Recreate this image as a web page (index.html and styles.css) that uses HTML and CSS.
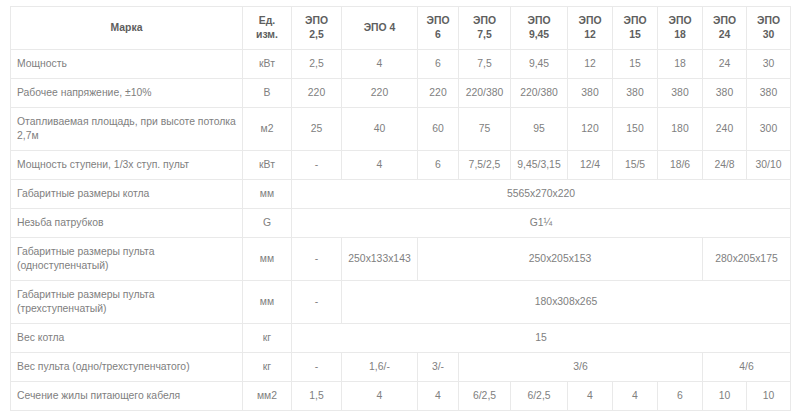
FILE: index.html
```html
<!DOCTYPE html>
<html lang="ru">
<head>
<meta charset="utf-8">
<title>ЭПО</title>
<link rel="stylesheet" href="styles.css">
</head>
<body>
<table class="spec">
  <colgroup>
    <col class="c-name"><col class="c-unit"><col class="c-25"><col class="c-4"><col class="c-6"><col class="c-75"><col class="c-945"><col class="c-12"><col class="c-15"><col class="c-18"><col class="c-24"><col class="c-30">
  </colgroup>
  <thead>
    <tr>
      <th>Марка</th>
      <th>Ед.<br>изм.</th>
      <th>ЭПО<br>2,5</th>
      <th>ЭПО 4</th>
      <th>ЭПО<br>6</th>
      <th>ЭПО<br>7,5</th>
      <th>ЭПО<br>9,45</th>
      <th>ЭПО<br>12</th>
      <th>ЭПО<br>15</th>
      <th>ЭПО<br>18</th>
      <th>ЭПО<br>24</th>
      <th>ЭПО<br>30</th>
    </tr>
  </thead>
  <tbody>
    <tr><td>Мощность</td><td>кВт</td><td>2,5</td><td>4</td><td>6</td><td>7,5</td><td>9,45</td><td>12</td><td>15</td><td>18</td><td>24</td><td>30</td></tr>
    <tr><td>Рабочее напряжение, ±10%</td><td>В</td><td>220</td><td>220</td><td>220</td><td>220/380</td><td>220/380</td><td>380</td><td>380</td><td>380</td><td>380</td><td>380</td></tr>
    <tr><td>Отапливаемая площадь, при высоте потолка 2,7м</td><td>м2</td><td>25</td><td>40</td><td>60</td><td>75</td><td>95</td><td>120</td><td>150</td><td>180</td><td>240</td><td>300</td></tr>
    <tr><td>Мощность ступени, 1/3х ступ. пульт</td><td>кВт</td><td>-</td><td>4</td><td>6</td><td>7,5/2,5</td><td>9,45/3,15</td><td>12/4</td><td>15/5</td><td>18/6</td><td>24/8</td><td>30/10</td></tr>
    <tr><td>Габаритные размеры котла</td><td>мм</td><td colspan="10">5565x270x220</td></tr>
    <tr><td>Незьба патрубков</td><td>G</td><td colspan="10">G1¼</td></tr>
    <tr><td>Габаритные размеры пульта (одноступенчатый)</td><td>мм</td><td>-</td><td>250x133x143</td><td colspan="6">250x205x153</td><td colspan="2">280x205x175</td></tr>
    <tr><td>Габаритные размеры пульта (трехступенчатый)</td><td>мм</td><td>-</td><td colspan="9">180x308x265</td></tr>
    <tr><td>Вес котла</td><td>кг</td><td colspan="10">15</td></tr>
    <tr><td>Вес пульта (одно/трехступенчатого)</td><td>кг</td><td>-</td><td>1,6/-</td><td>3/-</td><td colspan="5">3/6</td><td colspan="2">4/6</td></tr>
    <tr><td>Сечение жилы питающего кабеля</td><td>мм2</td><td>1,5</td><td>4</td><td>4</td><td>6/2,5</td><td>6/2,5</td><td>4</td><td>4</td><td>6</td><td>10</td><td>10</td></tr>
  </tbody>
</table>
</body>
</html>
```
FILE: styles.css
```css
html, body {
  margin: 0;
  padding: 0;
  background: #ffffff;
}

body {
  padding: 6px 10px 0 10px;
  font-family: "Liberation Sans", Arial, sans-serif;
  font-size: 10.4px;
  line-height: 14px;
  color: #808080;
}

.spec {
  width: 780px;
  border-collapse: collapse;
  table-layout: fixed;
}

.c-name { width: 232px; }
.c-unit { width: 49px; }
.c-25 { width: 50px; }
.c-4 { width: 76px; }
.c-6 { width: 41px; }
.c-75 { width: 52px; }
.c-945 { width: 57px; }
.c-12 { width: 45px; }
.c-15 { width: 45px; }
.c-18 { width: 45px; }
.c-24 { width: 44px; }
.c-30 { width: 44px; }

.spec th,
.spec td {
  border: 1px solid #e9e9e9;
  padding: 7px 2px;
  text-align: center;
  vertical-align: middle;
  white-space: nowrap;
}

.spec th {
  font-weight: bold;
  color: #5e5e5e;
}

.spec td:first-child {
  text-align: left;
  padding-left: 6px;
  padding-right: 4px;
  white-space: normal;
}
```
